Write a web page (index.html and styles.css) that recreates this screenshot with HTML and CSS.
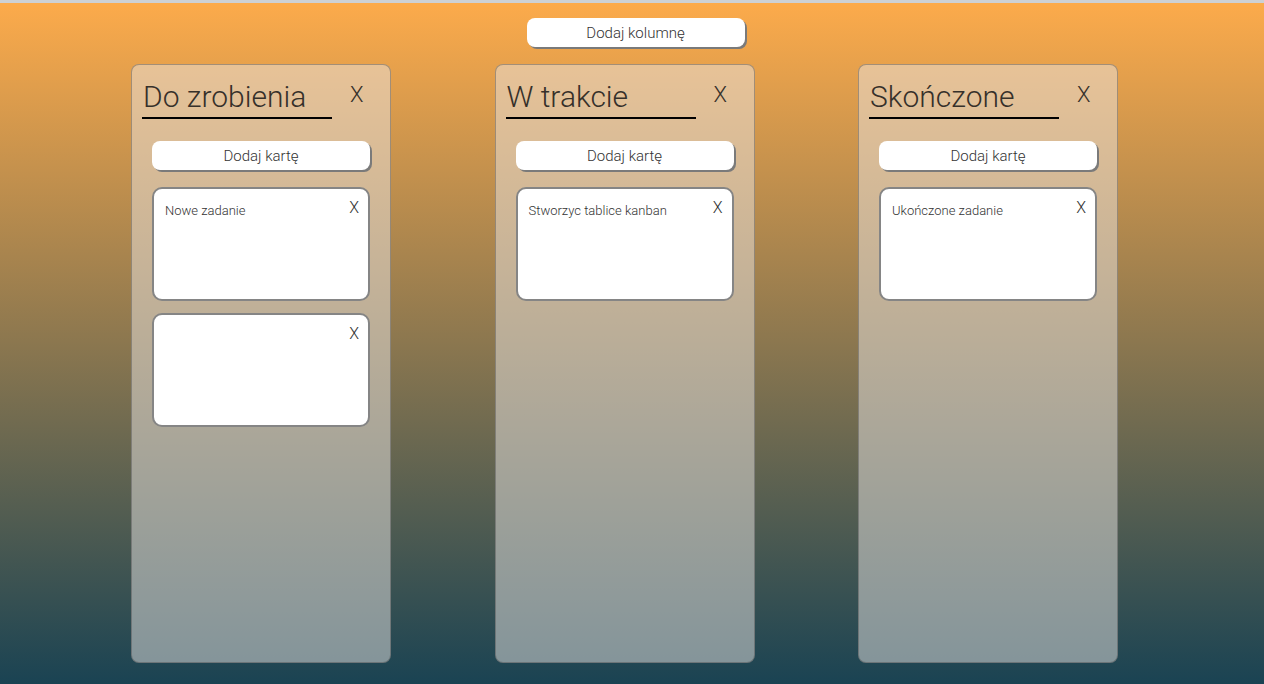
FILE: index.html
```html
<!DOCTYPE html>
<html lang="pl">
<head>
<meta charset="utf-8">
<title>Kanban</title>
<link rel="stylesheet" href="styles.css">
</head>
<body>
  <div class="topbar">
    <button class="btn btn-add-column">Dodaj kolumnę</button>
  </div>
  <div class="board">
    <section class="column">
      <div class="column-header">
        <h2 class="column-title">Do zrobienia</h2>
        <span class="column-close">X</span>
      </div>
      <button class="btn btn-add-card">Dodaj kartę</button>
      <div class="card-list">
        <div class="card">
          <p class="card-text">Nowe zadanie</p>
          <span class="card-close">X</span>
        </div>
        <div class="card">
          <p class="card-text"></p>
          <span class="card-close">X</span>
        </div>
      </div>
    </section>
    <section class="column">
      <div class="column-header">
        <h2 class="column-title">W trakcie</h2>
        <span class="column-close">X</span>
      </div>
      <button class="btn btn-add-card">Dodaj kartę</button>
      <div class="card-list">
        <div class="card">
          <p class="card-text">Stworzyc tablice kanban</p>
          <span class="card-close">X</span>
        </div>
      </div>
    </section>
    <section class="column">
      <div class="column-header">
        <h2 class="column-title">Skończone</h2>
        <span class="column-close">X</span>
      </div>
      <button class="btn btn-add-card">Dodaj kartę</button>
      <div class="card-list">
        <div class="card">
          <p class="card-text">Ukończone zadanie</p>
          <span class="card-close">X</span>
        </div>
      </div>
    </section>
  </div>
</body>
</html>
```

FILE: styles.css
```css
* {
  box-sizing: border-box;
}

html, body {
  height: 100%;
}

body {
  margin: 0;
  border-top: 3px solid #cdd1d5;
  background: linear-gradient(to bottom, #fdab4b 0%, #1a4353 100%);
  font-family: Roboto, "Noto Sans", sans-serif;
  color: #333;
  overflow: hidden;
}

.topbar {
  display: flex;
  justify-content: center;
  padding: 15px 0 0 7px;
}

.btn {
  border: none;
  background: #fff;
  border-radius: 8px;
  box-shadow: 2px 2px 0 #7a7a7a;
  font-family: Roboto, "Noto Sans", sans-serif;
  font-weight: 300;
  font-size: 15px;
  color: #333;
  height: 29px;
  width: 218px;
  padding: 0;
  cursor: pointer;
}

.board {
  display: flex;
  gap: 103.5px;
  padding-left: 131px;
  margin-top: 17px;
}

.column {
  width: 260px;
  height: 599px;
  border: 1px solid rgba(80, 80, 80, 0.45);
  border-radius: 8px;
  background: rgba(232, 228, 225, 0.5);
  padding: 15px 0 0 10px;
}

.column-header {
  display: flex;
  align-items: flex-start;
}

.column-title {
  margin: 0;
  width: 190px;
  font-size: 30px;
  font-weight: 300;
  line-height: 34px;
  padding: 0 0 3px 1px;
  border-bottom: 2px solid #000;
  color: #36302a;
  white-space: nowrap;
}

.column-close {
  margin-left: 18px;
  font-size: 22px;
  font-weight: 300;
  line-height: 34px;
  margin-top: -2px;
  color: #36302a;
}

.btn-add-card {
  display: block;
  margin: 22px 0 0 10px;
}

.card-list {
  display: flex;
  flex-direction: column;
  gap: 12px;
  margin: 17px 0 0 10px;
}

.card {
  position: relative;
  width: 218px;
  height: 114px;
  background: #fff;
  border: 2px solid #858585;
  border-radius: 10px;
  padding: 14px 11px;
}

.card-text {
  margin: 0;
  font-size: 13px;
  font-weight: 300;
  line-height: 16px;
  color: #333;
}

.card-close {
  position: absolute;
  top: 10px;
  right: 9px;
  font-size: 16px;
  font-weight: 300;
  line-height: 18px;
}
```
